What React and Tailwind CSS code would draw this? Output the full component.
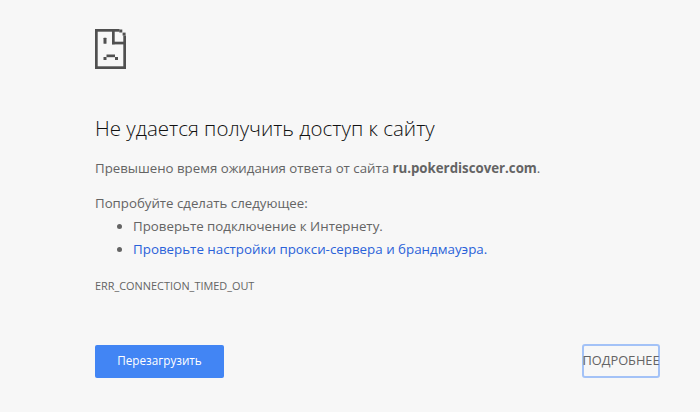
export default function App() {
  return (
    <div className="h-[412px] w-[700px] overflow-hidden bg-[#f7f7f7] text-[13.25px] text-[#646464]" style={{ fontFamily: '"Open Sans", "Noto Sans", sans-serif' }}>
      <div className="flex h-full flex-col pl-[95px] pr-[40px] pt-[29px]">
        <svg width="32" height="40" viewBox="0 0 32 40" className="block shrink-0">
          <g fill="#505050">
            <rect x="0" y="0" width="24.5" height="2.7" />
            <rect x="0" y="0" width="2.7" height="40" />
            <rect x="0" y="37.3" width="31" height="2.7" />
            <rect x="28.3" y="6.6" width="2.7" height="33.4" />
            <rect x="17" y="0" width="2.7" height="15.3" />
            <rect x="17" y="12.7" width="14" height="2.7" />
            <rect x="24.3" y="0.5" width="3" height="3" />
            <rect x="27.6" y="3.6" width="3" height="3" />
            <rect x="8.5" y="8.7" width="3" height="6" rx="0.5" />
            <rect x="8.5" y="28" width="3" height="3" />
            <rect x="20" y="28" width="3" height="3" />
            <rect x="11.5" y="25.5" width="8.5" height="2.7" />
          </g>
        </svg>
        <h1 className="mt-[45px] text-[20.5px] leading-[28px] font-light text-[#111111]">Не удается получить доступ к сайту</h1>
        <p className="mt-[16px] leading-[20px]">
          Превышено время ожидания ответа от сайта <b className="font-bold">ru.pokerdiscover.com</b>.
        </p>
        <p className="mt-[15px] leading-[20px]">Попробуйте сделать следующее:</p>
        <ul className="ml-[38px] mt-[2px] list-disc leading-[23px]">
          <li className="text-[13.3px]">Проверьте подключение к Интернету.</li>
          <li className="text-[13.35px] text-[#2a62d9] marker:text-[#646464]">Проверьте настройки прокси-сервера и брандмауэра.</li>
        </ul>
        <div className="mt-[17px] text-[10.9px] leading-[16px] uppercase">ERR_CONNECTION_TIMED_OUT</div>
        <div className="mt-[50px] flex w-[565px] items-center justify-between">
          <button className="h-[33px] w-[129px] rounded-[2px] bg-[#4285f4] text-[11.7px] font-medium text-white">Перезагрузить</button>
          <button className="flex h-[34px] w-[78px] items-center justify-center rounded-[3px] border-2 border-[#a3c2f7] text-[12.8px] whitespace-nowrap text-[#646464]">ПОДРОБНЕЕ</button>
        </div>
      </div>
    </div>
  );
}
